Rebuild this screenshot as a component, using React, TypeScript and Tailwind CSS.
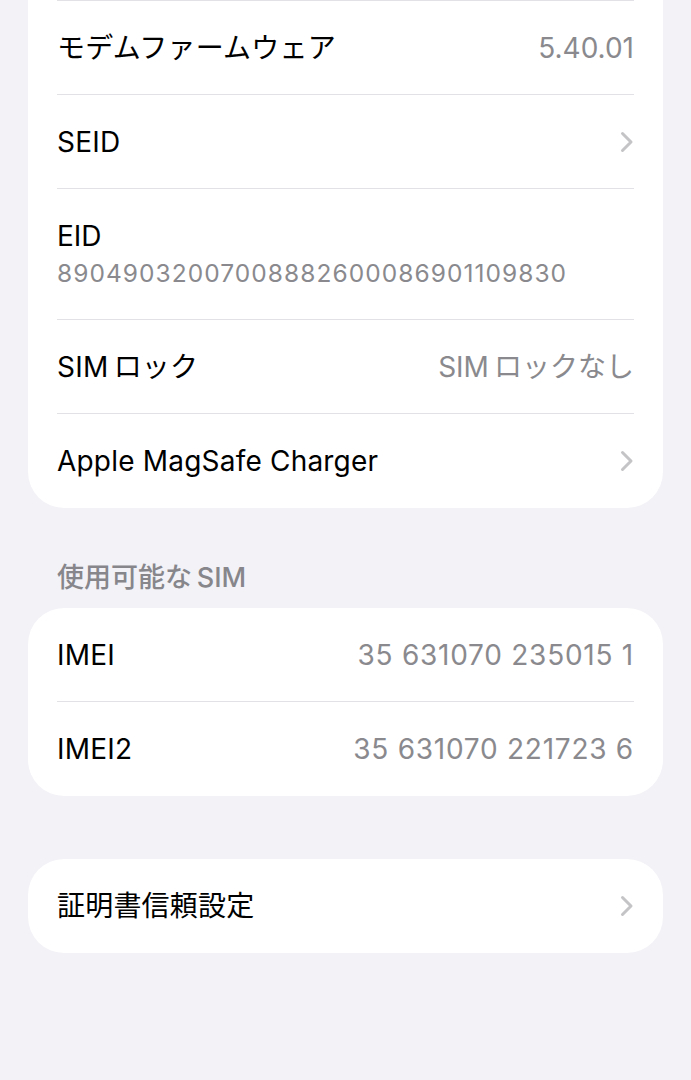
const FONT = { fontFamily: '"Inter", "Noto Sans CJK JP", sans-serif' };

function Chevron() {
  return (
    <svg width="14" height="22" viewBox="0 0 14 22" className="shrink-0">
      <path d="M2.5 2.5 L11 11 L2.5 19.5" fill="none" stroke="#c4c4c7" strokeWidth="3" strokeLinecap="round" strokeLinejoin="round" />
    </svg>
  );
}

function Row({
  label,
  value,
  chevron,
  last,
  digits,
}: {
  label: string;
  value?: string;
  chevron?: boolean;
  last?: boolean;
  digits?: boolean;
}) {
  return (
    <div className="px-[29px]">
      <div className={`flex h-[94px] items-center justify-between ${last ? "" : "border-b border-[#e2e2e6]"}`}>
        <span className="text-[28px] tracking-[0.2px] text-black">{label}</span>
        {value && (
          <span className={`text-[28px] text-[#8a8a8e] ${digits ? "tracking-[0.75px]" : ""}`}>{value}</span>
        )}
        {chevron && <Chevron />}
      </div>
    </div>
  );
}

export default function App() {
  return (
    <div className="min-h-[1080px] w-full bg-[#f2f2f7] px-[28px]" style={FONT}>
      <div className="rounded-b-[36px] bg-white">
        <div className="px-[29px]">
          <div className="border-t border-[#e2e2e6]" />
        </div>
        <Row label="モデムファームウェア" value="5.40.01" />
        <Row label="SEID" chevron />
        <div className="px-[29px]">
          <div className="flex h-[131px] flex-col justify-center border-b border-[#e2e2e6]">
            <span className="text-[28px] leading-[38px] text-black">EID</span>
            <span className="text-[24.5px] leading-[36px] tracking-[1.05px] text-[#8a8a8e]">
              89049032007008882600086901109830
            </span>
          </div>
        </div>
        <Row label={"SIM\u2009ロック"} value={"SIM\u2009ロックなし"} />
        <Row label="Apple MagSafe Charger" chevron last />
      </div>

      <div className="px-[29px] pt-[50px] pb-[7px] leading-[40px]">
        <span className="text-[27px] font-medium text-[#86868b]">使用可能な{"\u2009"}SIM</span>
      </div>

      <div className="rounded-[36px] bg-white">
        <Row label="IMEI" value="35 631070 235015 1" digits />
        <Row label="IMEI2" value="35 631070 221723 6" digits last />
      </div>

      <div className="mt-[63px] rounded-[36px] bg-white">
        <Row label="証明書信頼設定" chevron last />
      </div>
    </div>
  );
}
